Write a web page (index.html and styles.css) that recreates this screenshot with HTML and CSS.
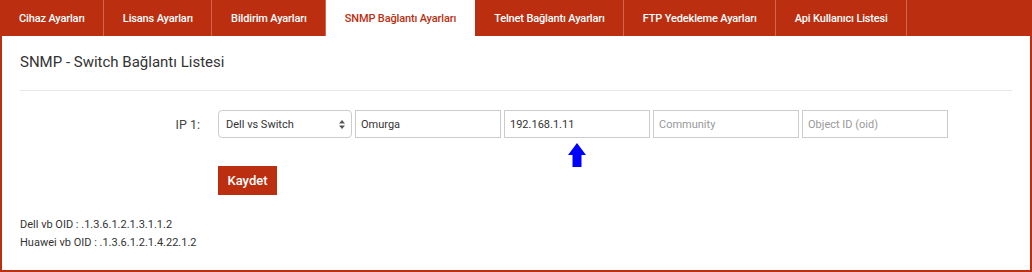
FILE: index.html
```html
<!DOCTYPE html>
<html lang="tr">
<head>
<meta charset="utf-8">
<title>SNMP Bağlantı Ayarları</title>
<link rel="stylesheet" href="styles.css">
</head>
<body>
<div class="page">
  <nav class="tabs">
    <a class="tab">Cihaz Ayarları</a>
    <a class="tab">Lisans Ayarları</a>
    <a class="tab">Bildirim Ayarları</a>
    <a class="tab active">SNMP Bağlantı Ayarları</a>
    <a class="tab">Telnet Bağlantı Ayarları</a>
    <a class="tab">FTP Yedekleme Ayarları</a>
    <a class="tab">Api Kullanıcı Listesi</a>
  </nav>
  <main class="content">
    <h2 class="title">SNMP - Switch Bağlantı Listesi</h2>
    <form class="form">
      <div class="row">
        <label class="label">IP 1:</label>
        <div class="controls">
          <div class="select">
            <span>Dell vs Switch</span>
            <svg class="caret" width="6" height="9" viewBox="0 0 6 9"><path d="M3 0L6 3.5H0Z M3 9L6 5.5H0Z" fill="#555"/></svg>
          </div>
          <div class="input">Omurga</div>
          <div class="input ip">192.168.1.11
            <svg class="arrow" width="18" height="24" viewBox="0 0 18 24"><path d="M9 0L18 12H13.5V24H4.5V12H0Z" fill="#0000ff"/></svg>
          </div>
          <div class="input placeholder">Community</div>
          <div class="input placeholder">Object ID (oid)</div>
        </div>
      </div>
      <div class="row actions">
        <div class="spacer"></div>
        <button type="button" class="btn">Kaydet</button>
      </div>
    </form>
    <div class="notes">
      <div>Dell vb OID : .1.3.6.1.2.1.3.1.1.2</div>
      <div>Huawei vb OID : .1.3.6.1.2.1.4.22.1.2</div>
    </div>
  </main>
</div>
</body>
</html>
```
FILE: styles.css
```css
* { box-sizing: border-box; }
html, body { margin: 0; padding: 0; background: #fff; }
body { font-family: Roboto, "Liberation Sans", Arial, sans-serif; color: #333; }
.page { width: 1032px; height: 272px; display: flex; flex-direction: column; }
.tabs { display: flex; height: 36px; background: #bb2f10; flex: none; }
.tab {
  display: flex; align-items: center; padding: 0 18px 0 19px;
  color: #fff; font-size: 11px; font-weight: 500; white-space: nowrap;
  letter-spacing: -0.15px;
  border-right: 1px solid #d2664f;
}
.tab.active { background: #fff; color: #bb2f10; border-right-color: #fff; }
.content {
  flex: 1; border: 2px solid #bb2f10; border-top: none;
  padding: 0 18px;
}
.title {
  margin: 16px 0 0; padding-bottom: 18px; font-size: 15px; font-weight: 400;
  line-height: 20px; color: #333; border-bottom: 1px solid #e8e8e8;
}
.form { margin-top: 19px; }
.row { display: flex; align-items: center; gap: 18px; }
.label { width: 180px; text-align: right; font-size: 12.5px; color: #444; }
.spacer { width: 180px; }
.controls { display: flex; gap: 3px; }
.select {
  width: 134px; height: 28px; border: 1px solid #ccc; border-radius: 4px;
  display: flex; align-items: center; justify-content: space-between;
  padding: 0 6px 0 7px; font-size: 11px; color: #333;
}
.input {
  width: 146px; height: 28px; border: 1px solid #ccc;
  display: flex; align-items: center; padding: 0 5px; font-size: 11px; color: #333;
}
.input.placeholder { color: #999; }
.ip { position: relative; }
.arrow { position: absolute; left: 63px; top: 32px; }
.actions { margin-top: 28px; }
.btn {
  width: 59px; height: 29px; border: none; background: #bb2f10; color: #fff;
  font-family: inherit; font-size: 13px; font-weight: 500; padding: 0;
}
.notes { margin-top: 21px; font-size: 11px; line-height: 18px; color: #333; }
```
